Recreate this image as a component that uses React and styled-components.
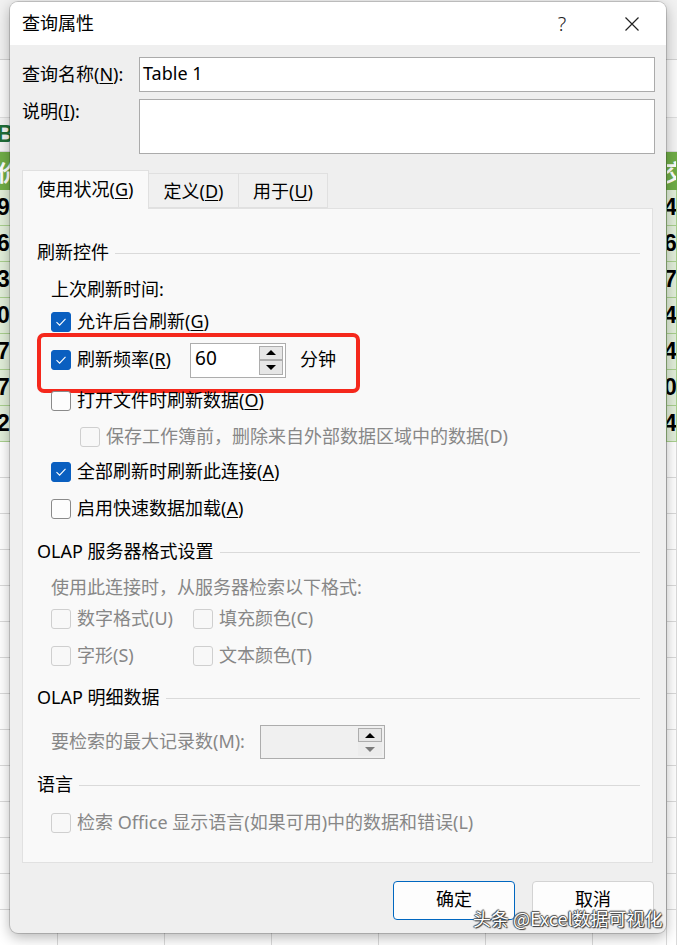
import React from "react";
import styled, { createGlobalStyle, css } from "styled-components";

const GlobalStyle = createGlobalStyle`
  html, body {
    margin: 0;
    padding: 0;
    background: #fff;
  }
  body {
    font-family: "Noto Sans", "Noto Sans CJK SC", sans-serif;
    overflow: hidden;
  }
  *, *::before, *::after {
    box-sizing: border-box;
  }
`;

const Page = styled.div`
  position: relative;
  width: 677px;
  height: 945px;
  overflow: hidden;
  background: #fff;
`;

/* spreadsheet behind the dialog */
const Sheet = styled.div`
  display: flex;
  flex-direction: column;
`;

const SheetRow = styled.div`
  display: grid;
  grid-template-columns: 58px repeat(5, 107px) 74px 1fr;
  flex: none;
  height: ${(p) => p.$h}px;
  background: ${(p) => p.$bg || "#fff"};
  border-bottom: 1px solid ${(p) => p.$line || "#dadada"};
`;

const Cell = styled.div`
  display: flex;
  align-items: center;
  overflow: hidden;
  white-space: nowrap;
  text-indent: -3px;
  border-right: 1px solid ${(p) => (p.$plain ? "transparent" : p.$line || "#dadada")};
  font: bold 23px "Liberation Sans", "Noto Sans CJK SC", sans-serif;
  color: ${(p) => p.$color || "#000"};
`;

/* dialog */
const Dialog = styled.div`
  position: absolute;
  top: 2px;
  left: 10px;
  width: 656px;
  height: 931px;
  display: flex;
  flex-direction: column;
  background: #efefef;
  border-radius: 8px;
  overflow: hidden;
  box-shadow: 0 0 0 1px rgba(0, 0, 0, 0.16), 0 4px 14px rgba(0, 0, 0, 0.3);
  font-family: "Noto Sans", "Noto Sans CJK SC", sans-serif;
  font-size: 18px;
  color: #000;
`;

const TitleBar = styled.div`
  display: flex;
  align-items: center;
  height: 43px;
  padding: 0 11px 0 12px;
  background: #fff;
  flex: none;
`;

const Title = styled.div`
  flex: 1;
  font-size: 18px;
  line-height: 1.2;
  padding-top: 1px;
`;

const TitleButton = styled.div`
  display: flex;
  align-items: center;
  justify-content: center;
  width: 46px;
  height: 43px;
  margin-left: ${(p) => p.$gap || 0}px;
  font-size: 20px;
  font-weight: 300;
  color: #222;
`;

const Body = styled.div`
  display: flex;
  flex-direction: column;
  flex: 1;
  padding: 12px 11px 13px 12px;
`;

const FieldRow = styled.div`
  display: flex;
  align-items: ${(p) => (p.$top ? "flex-start" : "center")};
  margin-top: ${(p) => p.$mt || 0}px;
`;

const FieldLabel = styled.div`
  width: 117px;
  line-height: 1.2;
  padding-top: ${(p) => (p.$top ? 2 : 0)}px;
`;

const TextBox = styled.div`
  flex: 1;
  height: ${(p) => p.$h}px;
  display: flex;
  align-items: ${(p) => (p.$h > 40 ? "flex-start" : "center")};
  padding: 0 0 3px 3px;
  background: #fff;
  border: 1px solid #ababab;
  font-size: 18px;
`;

const Key = styled.u`
  text-underline-offset: 2px;
  text-decoration-thickness: 1px;
`;

const Tabs = styled.div`
  display: flex;
  align-items: flex-end;
  height: 38px;
  margin-top: 16px;
  position: relative;
  z-index: 1;
`;

const Tab = styled.div`
  display: flex;
  align-items: center;
  justify-content: center;
  width: ${(p) => p.$w}px;
  height: ${(p) => (p.$active ? 39 : 35)}px;
  margin-bottom: ${(p) => (p.$active ? -1 : 0)}px;
  background: ${(p) => (p.$active ? "#f9f9f9" : "#f0f0f0")};
  border: 1px solid #e0e0e0;
  border-bottom: ${(p) => (p.$active ? "none" : "1px solid #e0e0e0")};
  border-left: ${(p) => (p.$first ? "1px solid #e0e0e0" : "none")};
  padding-top: ${(p) => (p.$active ? 0 : 2)}px;
  line-height: 1.2;
`;

const Panel = styled.div`
  width: 631px;
  height: 655px;
  padding: 28px 12px 0 14px;
  background: #f9f9f9;
  border: 1px solid #e1e1e1;
  display: flex;
  flex-direction: column;
`;

const SectionHeader = styled.div`
  display: flex;
  align-items: center;
  height: 32px;
  margin-top: ${(p) => p.$mt || 0}px;
  line-height: 1.2;
  white-space: nowrap;
  &::after {
    content: "";
    flex: 1;
    height: 1px;
    margin-left: 6px;
    background: #dadada;
  }
`;

const Row = styled.div`
  position: relative;
  display: flex;
  align-items: center;
  height: ${(p) => p.$h || 32}px;
  margin-top: ${(p) => p.$mt || 0}px;
  padding-left: ${(p) => (p.$indent === undefined ? 14 : p.$indent)}px;
  line-height: 1.2;
  white-space: nowrap;
  color: ${(p) => (p.$muted ? "#878787" : "#000")};
  ${(p) =>
    p.$highlight &&
    css`
      &::before {
        content: "";
        position: absolute;
        left: 0;
        top: -11px;
        width: 323px;
        height: 60px;
        border: 4px solid #f5281c;
        border-radius: 7px;
        pointer-events: none;
      }
    `}
`;

const CheckItem = styled.div`
  display: flex;
  align-items: center;
  width: ${(p) => (p.$w ? `${p.$w}px` : "auto")};
  color: ${(p) => (p.$disabled ? "#878787" : "#000")};
`;

const Box = styled.span`
  display: flex;
  align-items: center;
  justify-content: center;
  width: 20px;
  height: 20px;
  flex: none;
  margin-right: 6px;
  border-radius: 3px;
  ${(p) =>
    p.$checked
      ? css`
          background: #0a5fc0;
          border: 1px solid #0a5fc0;
        `
      : p.$disabled
      ? css`
          background: #f8f8f8;
          border: 1px solid #cfcfcf;
        `
      : css`
          background: #fdfdfd;
          border: 1px solid #8a8a8a;
        `}
`;

const NumberBox = styled.div`
  display: flex;
  align-items: center;
  width: ${(p) => p.$w}px;
  height: ${(p) => p.$h}px;
  margin-left: ${(p) => p.$ml}px;
  padding: 2px;
  background: ${(p) => (p.$disabled ? "#f0f0f0" : "#fff")};
  border: 1px solid #adadad;
`;

const NumberValue = styled.div`
  flex: 1;
  padding: 0 0 4px 2px;
  font-size: 19px;
`;

const Spinner = styled.div`
  display: flex;
  flex-direction: column;
  width: 24px;
  height: 100%;
`;

const SpinButton = styled.div`
  flex: 1;
  display: flex;
  align-items: center;
  justify-content: center;
  background: ${(p) => (p.$flat ? "#ececec" : "#e6e6e6")};
  border: 1px solid ${(p) => (p.$flat ? "transparent" : "#adadad")};
  &::after {
    content: "";
    width: 0;
    height: 0;
    border-left: 5px solid transparent;
    border-right: 5px solid transparent;
    ${(p) =>
      p.$down
        ? css`border-top: 5px solid ${p.$faded ? "#7c7c7c" : "#000"};`
        : css`border-bottom: 5px solid ${p.$faded ? "#7c7c7c" : "#000"};`}
  }
`;

const Unit = styled.span`
  margin-left: 14px;
`;

const Footer = styled.div`
  display: flex;
  justify-content: flex-end;
  gap: 17px;
  margin-top: 18px;
  padding-right: 1px;
`;

const Button = styled.div`
  display: flex;
  align-items: center;
  justify-content: center;
  width: 122px;
  height: 39px;
  background: #fdfdfd;
  border: 1px solid ${(p) => (p.$primary ? "#0067c0" : "#d3d3d3")};
  border-radius: 4px;
  line-height: 1.2;
  padding-bottom: 2px;
`;

const Watermark = styled.div`
  position: absolute;
  left: 473px;
  top: 908px;
  font-family: "Noto Sans CJK SC", sans-serif;
  font-size: 18px;
  line-height: 1.2;
  color: #fff;
  white-space: nowrap;
  text-shadow: 0 0 1px #222, 1px 1px 1px #333, -1px 0 1px #555, 0 -1px 1px #555;
`;

function Check({ checked, disabled }) {
  return (
    <Box $checked={checked} $disabled={disabled}>
      {checked && (
        <svg width="14" height="14" viewBox="0 0 14 14">
          <path d="M2.5 7.2 L5.6 10.2 L11.5 3.8" fill="none" stroke="#fff" strokeWidth="1.1" />
        </svg>
      )}
    </Box>
  );
}

function CheckLabel({ checked, disabled, w, children }) {
  return (
    <CheckItem $w={w} $disabled={disabled}>
      <Check checked={checked} disabled={disabled} />
      <span>{children}</span>
    </CheckItem>
  );
}

const dataRows = [
  ["94", "4"],
  ["60", "6"],
  ["35", "7"],
  ["00", "4"],
  ["70", "4"],
  ["78", "0"],
  ["20", "4"],
];

function SheetLine({ h, bg, line, left, right, color, plain }) {
  const cells = Array.from({ length: 8 });
  return (
    <SheetRow $h={h} $bg={bg} $line={line}>
      {cells.map((_, i) => (
        <Cell key={i} $line={line} $color={color} $plain={plain}>
          {i === 0 ? left : i === 7 ? right : null}
        </Cell>
      ))}
    </SheetRow>
  );
}

export default function App() {
  const blanks = Array.from({ length: 15 });
  return (
    <Page>
      <GlobalStyle />
      <Sheet>
        <SheetLine h={60} bg="#f1f1f1" line="#d2d2d2" plain />
        <SheetLine h={58} bg="#fbfbfb" line="#dedede" plain />
        <SheetLine h={34} bg="#f4f4f4" line="#dadada" left="B" color="#1f6e38" plain />
        <SheetLine h={38} bg="#70ad47" line="#70ad47" left="价" right="交" color="#fff" />
        {dataRows.map(([l, r], i) => (
          <SheetLine key={i} h={36} bg="#e2efda" line="#a9d08e" left={l} right={r} />
        ))}
        {blanks.map((_, i) => (
          <SheetLine key={"b" + i} h={36} />
        ))}
      </Sheet>

      <Dialog>
        <TitleBar>
          <Title>查询属性</Title>
          <TitleButton>?</TitleButton>
          <TitleButton $gap={24}>
            <svg width="16" height="16" viewBox="0 0 16 16">
              <path d="M1.5 1.5 L14.5 14.5 M14.5 1.5 L1.5 14.5" stroke="#222" strokeWidth="1.2" fill="none" />
            </svg>
          </TitleButton>
        </TitleBar>

        <Body>
          <FieldRow>
            <FieldLabel>
              查询名称(<Key>N</Key>):
            </FieldLabel>
            <TextBox $h={35}>Table 1</TextBox>
          </FieldRow>
          <FieldRow $top $mt={7}>
            <FieldLabel $top>
              说明(<Key>I</Key>):
            </FieldLabel>
            <TextBox $h={55} />
          </FieldRow>

          <Tabs>
            <Tab $w={127} $active $first>
              使用状况(<Key>G</Key>)
            </Tab>
            <Tab $w={90}>
              定义(<Key>D</Key>)
            </Tab>
            <Tab $w={89}>
              用于(<Key>U</Key>)
            </Tab>
          </Tabs>

          <Panel>
            <SectionHeader>刷新控件</SectionHeader>
            <Row $mt={5}>上次刷新时间:</Row>
            <Row>
              <CheckLabel checked>
                允许后台刷新(<Key>G</Key>)
              </CheckLabel>
            </Row>
            <Row $mt={6} $highlight>
              <CheckLabel checked>
                刷新频率(<Key>R</Key>)
              </CheckLabel>
              <NumberBox $w={96} $h={35} $ml={19}>
                <NumberValue>60</NumberValue>
                <Spinner>
                  <SpinButton />
                  <SpinButton $down />
                </Spinner>
              </NumberBox>
              <Unit>分钟</Unit>
            </Row>
            <Row $mt={9}>
              <CheckLabel>
                打开文件时刷新数据(<Key>O</Key>)
              </CheckLabel>
            </Row>
            <Row $mt={4} $indent={43}>
              <CheckLabel disabled>保存工作簿前，删除来自外部数据区域中的数据(D)</CheckLabel>
            </Row>
            <Row $mt={3}>
              <CheckLabel checked>
                全部刷新时刷新此连接(<Key>A</Key>)
              </CheckLabel>
            </Row>
            <Row $mt={5}>
              <CheckLabel>
                启用快速数据加载(<Key>A</Key>)
              </CheckLabel>
            </Row>

            <SectionHeader $mt={11}>OLAP 服务器格式设置</SectionHeader>
            <Row $mt={4} $muted>
              使用此连接时，从服务器检索以下格式:
            </Row>
            <Row $h={30}>
              <CheckLabel disabled w={142}>
                数字格式(U)
              </CheckLabel>
              <CheckLabel disabled>填充颜色(C)</CheckLabel>
            </Row>
            <Row $mt={6}>
              <CheckLabel disabled w={142}>
                字形(S)
              </CheckLabel>
              <CheckLabel disabled>文本颜色(T)</CheckLabel>
            </Row>

            <SectionHeader $mt={10}>OLAP 明细数据</SectionHeader>
            <Row $mt={11} $h={34} $muted>
              要检索的最大记录数(M):
              <NumberBox $w={125} $h={34} $ml={15} $disabled>
                <NumberValue />
                <Spinner>
                  <SpinButton />
                  <SpinButton $down $flat $faded />
                </Spinner>
              </NumberBox>
            </Row>

            <SectionHeader $mt={10}>语言</SectionHeader>
            <Row $mt={6}>
              <CheckLabel disabled>检索 Office 显示语言(如果可用)中的数据和错误(L)</CheckLabel>
            </Row>
          </Panel>

          <Footer>
            <Button $primary>确定</Button>
            <Button>取消</Button>
          </Footer>
        </Body>
      </Dialog>

      <Watermark>头条 @Excel数据可视化</Watermark>
    </Page>
  );
}
